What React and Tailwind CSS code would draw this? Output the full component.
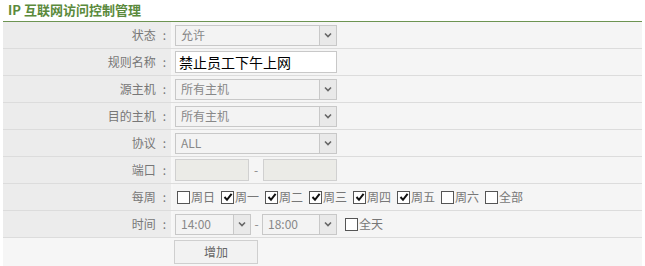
const font = { fontFamily: '"Noto Sans CJK SC", "Noto Sans", sans-serif' };

const Arrow = () => (
  <span className="absolute right-0 top-0 h-full w-[17px] border-l border-[#c8c8c8] bg-[#e9e9e9] flex items-center justify-center">
    <svg width="8" height="6" viewBox="0 0 8 6">
      <path d="M1 1.5 L4 4.5 L7 1.5" fill="none" stroke="#666" strokeWidth="1.6" />
    </svg>
  </span>
);

const Select = ({ value, width = "w-[162px]" }) => (
  <div className={`relative h-[21px] ${width} border border-[#c8c8c8] bg-[#f3f3f3] flex items-center pl-[5px] text-[12px] text-[#888]`}>
    {value}
    <Arrow />
  </div>
);

const Check = ({ on }) => (
  <span className="w-[13px] h-[13px] border border-[#555] bg-white flex items-center justify-center shrink-0">
    {on && (
      <svg width="10" height="10" viewBox="0 0 10 10">
        <path d="M1.5 5 L4 7.8 L8.6 1.8" fill="none" stroke="#111" strokeWidth="2" />
      </svg>
    )}
  </span>
);

const Row = ({ label, children, last }) => (
  <div className={`flex h-[27px] ${last ? "" : "border-b border-[#dcdcdc]"}`}>
    <div className="w-[170px] bg-[#ececec] border-r-2 border-[#f7f7f7] flex items-center justify-end pr-[5px] text-[12px] text-[#777]">
      {label}
      <span className="ml-[7px]">:</span>
    </div>
    <div className="flex-1 bg-[#f5f5f5] flex items-center pl-[2px]">{children}</div>
  </div>
);

const days = [
  ["周日", false],
  ["周一", true],
  ["周二", true],
  ["周三", true],
  ["周四", true],
  ["周五", true],
  ["周六", false],
  ["全部", false],
];

export default function App() {
  return (
    <div className="w-[645px] h-[266px] bg-white overflow-hidden" style={font}>
      <div className="h-[21px] pl-[8px] pt-[1px] text-[13px] font-bold text-[#5b8a3c] leading-[17px]">
        IP 互联网访问控制管理
      </div>
      <div className="mx-[3px] w-[639px] border-t border-[#6d9452]">
        <Row label="状态">
          <Select value="允许" />
        </Row>
        <Row label="规则名称">
          <div className="h-[22px] w-[162px] border border-[#c8c8c8] bg-white flex items-center pl-[3px] text-[14px] text-black">
            禁止员工下午上网
          </div>
        </Row>
        <Row label="源主机">
          <Select value="所有主机" />
        </Row>
        <Row label="目的主机">
          <Select value="所有主机" />
        </Row>
        <Row label="协议">
          <Select value="ALL" />
        </Row>
        <Row label="端口">
          <div className="h-[22px] w-[74px] border border-[#d0d0d0] bg-[#ebebe7]" />
          <span className="w-[14px] text-center text-[12px] text-[#888]">-</span>
          <div className="h-[22px] w-[74px] border border-[#d0d0d0] bg-[#ebebe7]" />
        </Row>
        <Row label="每周">
          <div className="flex items-center pl-[2px] text-[12px] text-[#777]">
            {days.map(([d, on]) => (
              <span key={d} className="flex items-center mr-[6px]">
                <Check on={on} />
                <span className="ml-[1px]">{d}</span>
              </span>
            ))}
          </div>
        </Row>
        <Row label="时间">
          <Select value="14:00" width="w-[76px]" />
          <span className="w-[11px] text-center text-[12px] text-[#888]">-</span>
          <Select value="18:00" width="w-[75px]" />
          <span className="flex items-center ml-[8px] text-[12px] text-[#777]">
            <Check />
            <span className="ml-[1px]">全天</span>
          </span>
        </Row>
        <div className="flex h-[30px] bg-[#f6f6f6] pl-[171px] pt-[2px]">
          <button className="h-[24px] w-[84px] border border-[#cfcfcf] bg-[#f2f2f2] text-[12px] text-[#666]">
            增加
          </button>
        </div>
      </div>
    </div>
  );
}
